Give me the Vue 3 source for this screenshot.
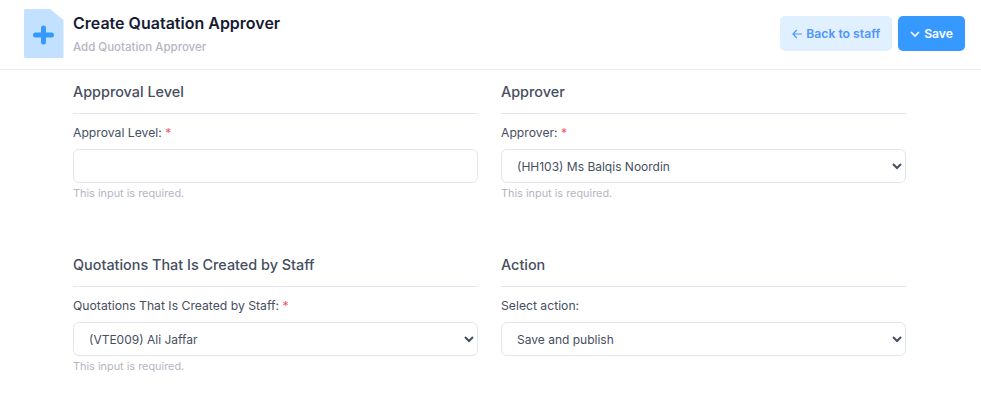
<template>
  <div class="page">
    <header class="topbar">
      <div class="heading">
        <svg class="file-icon" width="40" height="50" viewBox="0 0 40 50">
          <path d="M1.500 0H26l13.500 11v36.500a1.500 1.500 0 0 1-1.500 1.500H1.500A1.500 1.500 0 0 1 0 47.500V1.500A1.500 1.500 0 0 1 1.500 0z" fill="#c2e0ff" />
          <path d="M19.500 19v14M11.500 26h16" stroke="#3699ff" stroke-width="5" stroke-linecap="round" />
        </svg>
        <div class="heading-text">
          <h1 class="title">Create Quatation Approver</h1>
          <p class="subtitle">Add Quotation Approver</p>
        </div>
      </div>
      <div class="actions">
        <button class="btn btn-light" type="button">
          <svg width="10" height="10" viewBox="0 0 10 10">
            <path d="M10 5H1M4.800 1 1 5l3.800 4" fill="none" stroke="currentColor" stroke-width="1.200" />
          </svg>
          Back to staff
        </button>
        <button class="btn btn-primary" type="button">
          <svg width="10" height="8" viewBox="0 0 10 8">
            <path d="M1 2 5 6l4-4" fill="none" stroke="currentColor" stroke-width="1.600" />
          </svg>
          Save
        </button>
      </div>
    </header>

    <main class="form">
      <section v-for="s in sections" :key="s.title" class="section">
        <h2 class="section-title">{{ s.title }}</h2>
        <label class="label">
          {{ s.label }}<span v-if="s.required" class="star"> *</span>
        </label>
        <input v-if="!s.options" class="control" type="text" />
        <select v-else class="control control-select">
          <option v-for="o in s.options" :key="o">{{ o }}</option>
        </select>
        <p v-if="s.required" class="help">This input is required.</p>
      </section>
    </main>
  </div>
</template>

<script setup>
const sections = [
  { title: "Appproval Level", label: "Approval Level:", required: true },
  { title: "Approver", label: "Approver:", required: true, options: ["(HH103) Ms Balqis Noordin"] },
  {
    title: "Quotations That Is Created by Staff",
    label: "Quotations That Is Created by Staff:",
    required: true,
    options: ["(VTE009) Ali Jaffar"]
  },
  { title: "Action", label: "Select action:", required: false, options: ["Save and publish"] }
];
</script>

<style>
html, body {
  margin: 0;
  background: #fff;
}
</style>

<style scoped>
.page {
  min-height: 420px;
  font-family: Inter, "Open Sans", sans-serif;
  color: #464e5f;
  background: #fff;
}

.topbar {
  display: flex;
  justify-content: space-between;
  align-items: flex-start;
  height: 69px;
  padding: 0 16px 0 24px;
  border-bottom: 1px solid #ebedf3;
  background: #fff;
}

.heading {
  display: flex;
  align-items: flex-start;
  gap: 9px;
  padding-top: 9px;
}

.file-icon {
  display: block;
  flex: none;
}

.title {
  margin: 4px 0 0;
  font-size: 16px;
  line-height: 20px;
  font-weight: 600;
  color: #181c32;
}

.subtitle {
  margin: 6px 0 0;
  font-size: 11.500px;
  line-height: 16px;
  font-weight: 500;
  color: #b5b5c3;
}

.actions {
  display: flex;
  gap: 6px;
  padding-top: 16px;
}

.btn {
  display: flex;
  align-items: center;
  gap: 4px;
  height: 35px;
  padding: 0 12px;
  border: 0;
  border-radius: 5px;
  font-family: inherit;
  font-size: 12.200px;
  font-weight: 600;
}

.btn-light {
  background: #e1f0ff;
  color: #4f94ff;
}

.btn-primary {
  background: #3699ff;
  color: #fff;
}

.form {
  display: grid;
  grid-template-columns: 405px 405px;
  column-gap: 23px;
  padding-left: 73px;
}

.section {
  height: 173px;
}

.section-title {
  margin: 0;
  height: 43px;
  border-bottom: 1px solid #e4e6ef;
  font-size: 14.400px;
  line-height: 43px;
  font-weight: 500;
  color: #464e5f;
}

.label {
  display: block;
  margin-top: 10px;
  font-size: 12.200px;
  line-height: 18px;
  color: #464e5f;
}

.star {
  color: #f64e60;
}

.control {
  display: block;
  box-sizing: border-box;
  width: 100%;
  height: 34px;
  margin-top: 7px;
  padding: 0 12px;
  border: 1px solid #e4e6ef;
  border-radius: 6px;
  background: #fff;
  font-family: inherit;
  font-size: 12px;
  color: #464e5f;
  outline: none;
}

.control-select {
  padding-left: 11px;
}

.help {
  margin: 2px 0 0;
  font-size: 10.900px;
  line-height: 16px;
  color: #b5b5c3;
}
</style>
